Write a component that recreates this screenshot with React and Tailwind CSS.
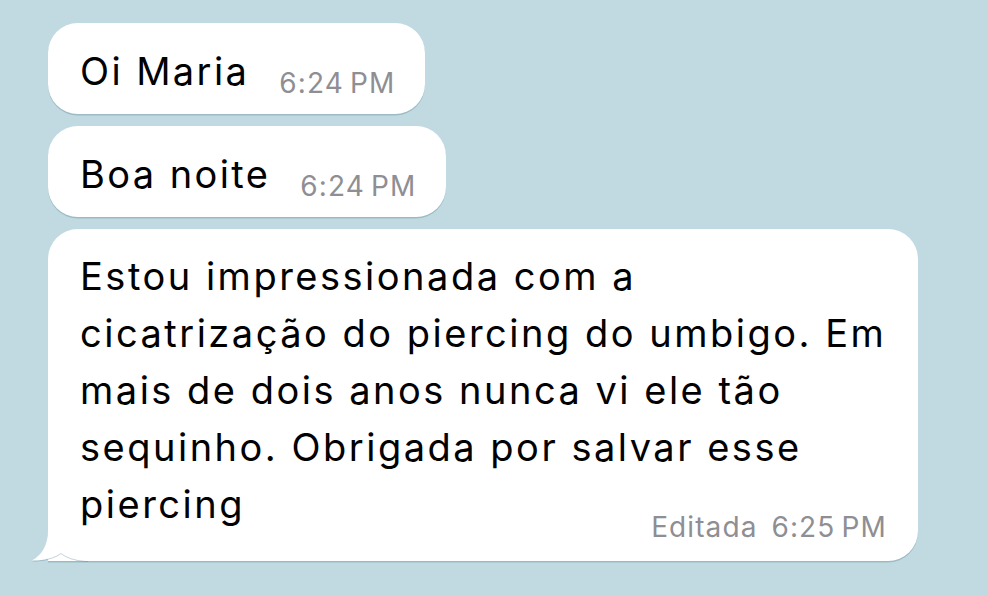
import React from 'react';

const font = { fontFamily: 'Inter, "Noto Sans", sans-serif' };

const Time = ({ children, className = '' }) => (
  <span className={`text-[28px] leading-[28px] tracking-[1.1px] text-[#8e8e93] whitespace-nowrap ${className}`}>
    {children}
  </span>
);

const ShortBubble = ({ text, time }) => (
  <div className="inline-flex items-end rounded-[30px] bg-white pl-8 pr-[30px] pt-5 pb-[14px] shadow-[0_1.5px_0_rgba(90,130,145,0.35)]">
    <span className="text-[38px] leading-[57px] tracking-[2.4px] text-black">{text}</span>
    <Time className="ml-[30px] mb-[3px]">{time}</Time>
  </div>
);

const lines = [
  'Estou impressionada com a',
  'cicatrização do piercing do umbigo. Em',
  'mais de dois anos nunca vi ele tão',
  'sequinho. Obrigada por salvar esse',
  'piercing',
];

export default function App() {
  return (
    <div className="min-h-screen w-full bg-[#c1dae1] pt-[23px] pl-12" style={font}>
      <div className="flex flex-col items-start gap-3">
        <ShortBubble text="Oi Maria" time={'6:24\u202FPM'} />
        <ShortBubble text="Boa noite" time={'6:24\u202FPM'} />

        <div className="relative w-[870px] rounded-[30px] rounded-bl-none bg-white pl-8 pr-[31px] pt-[19px] pb-5 shadow-[0_1.5px_0_rgba(90,130,145,0.35)]">
          {/* tail */}
          <svg
            className="absolute -left-[18px] bottom-0 drop-shadow-[0_1.5px_0_rgba(90,130,145,0.35)]"
            width="60"
            height="60"
            viewBox="0 0 60 60"
          >
            <path
              d="M18 0 L18 29 C18 44 12 54 2 59.5 C12 60 24 57 31 52 C36 56 44 59 56 60 L58 60 L58 0 Z"
              fill="#ffffff"
            />
          </svg>

          <div className="relative text-[38px] leading-[57px] tracking-[2.5px] text-black">
            {lines.map((l) => (
              <div key={l} className="whitespace-nowrap">{l}</div>
            ))}
          </div>
          <div className="relative -mt-5 flex justify-end">
            <Time>
              <span className="mr-[5px]">Editada</span> 6:25{'\u202F'}PM
            </Time>
          </div>
        </div>
      </div>
    </div>
  );
}
